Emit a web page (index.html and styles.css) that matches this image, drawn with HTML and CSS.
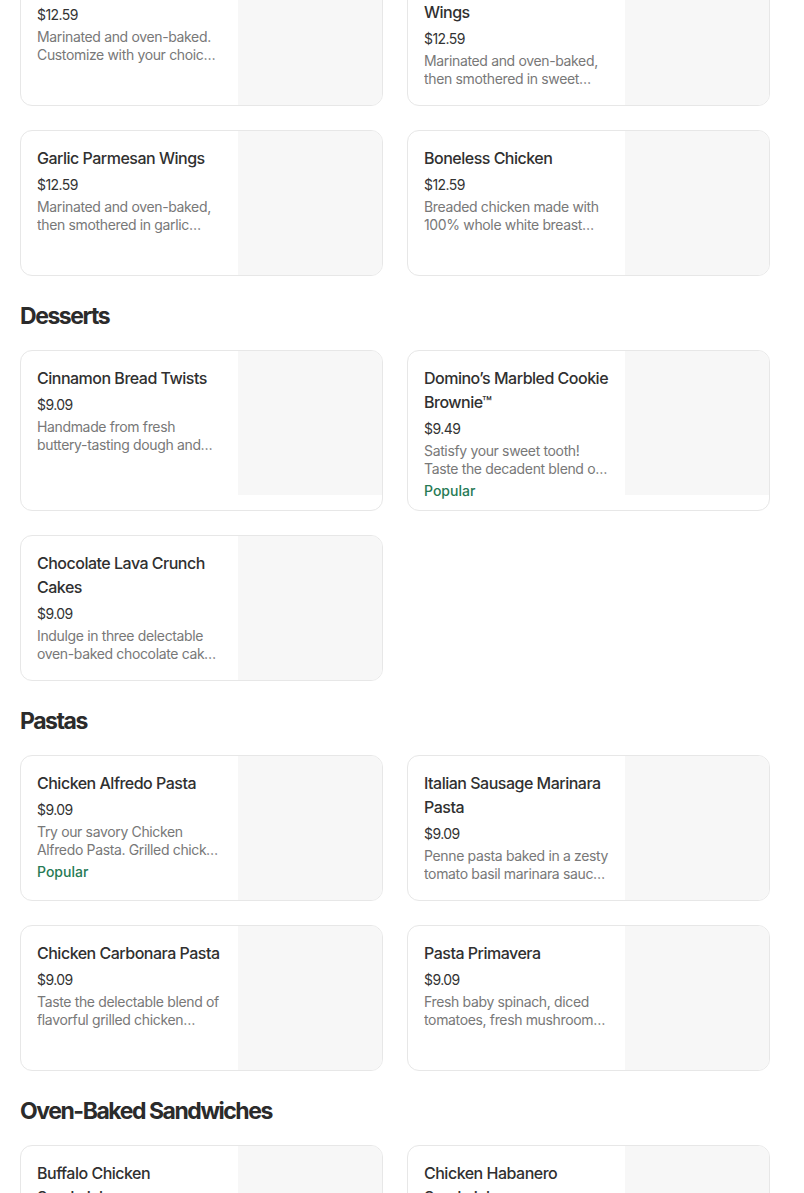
FILE: index.html
```html
<!DOCTYPE html>
<html lang="en">
<head>
<meta charset="utf-8">
<title>Menu</title>
<link rel="stylesheet" href="styles.css">
</head>
<body>
<main class="menu">
  <section class="section section-first">
    <div class="grid">
      <article class="card">
        <div class="info">
          <h3 class="title">Plain Wings</h3>
          <div class="price">$12.59</div>
          <p class="desc">Marinated and oven-baked. Customize with your choice of dipping sauce.</p>
        </div>
        <div class="thumb"></div>
      </article>
      <article class="card">
        <div class="info">
          <h3 class="title">Sweet Mango Habanero Wings</h3>
          <div class="price">$12.59</div>
          <p class="desc">Marinated and oven-baked, then smothered in sweet mango habanero sauce.</p>
        </div>
        <div class="thumb"></div>
      </article>
      <article class="card">
        <div class="info">
          <h3 class="title">Garlic Parmesan Wings</h3>
          <div class="price">$12.59</div>
          <p class="desc">Marinated and oven-baked, then smothered in garlic parmesan sauce.</p>
        </div>
        <div class="thumb"></div>
      </article>
      <article class="card">
        <div class="info">
          <h3 class="title">Boneless Chicken</h3>
          <div class="price">$12.59</div>
          <p class="desc">Breaded chicken made with 100% whole white breast meat.</p>
        </div>
        <div class="thumb"></div>
      </article>
    </div>
  </section>

  <section class="section">
    <h2 class="heading">Desserts</h2>
    <div class="grid">
      <article class="card">
        <div class="info">
          <h3 class="title">Cinnamon Bread Twists</h3>
          <div class="price">$9.09</div>
          <p class="desc">Handmade from fresh buttery-tasting dough and baked to a golden brown.</p>
        </div>
        <div class="thumb"></div>
      </article>
      <article class="card">
        <div class="info">
          <h3 class="title">Domino’s Marbled Cookie Brownie™</h3>
          <div class="price">$9.49</div>
          <p class="desc">Satisfy your sweet tooth! Taste the decadent blend of gooey milk chocolate chunk cookie and delicious fudge brownie.</p>
          <div class="tag">Popular</div>
        </div>
        <div class="thumb"></div>
      </article>
      <article class="card">
        <div class="info">
          <h3 class="title">Chocolate Lava Crunch Cakes</h3>
          <div class="price">$9.09</div>
          <p class="desc">Indulge in three delectable oven-baked chocolate cakes with molten chocolate fudge on the inside.</p>
        </div>
        <div class="thumb"></div>
      </article>
    </div>
  </section>

  <section class="section">
    <h2 class="heading">Pastas</h2>
    <div class="grid">
      <article class="card">
        <div class="info">
          <h3 class="title">Chicken Alfredo Pasta</h3>
          <div class="price">$9.09</div>
          <p class="desc">Try our savory Chicken Alfredo Pasta. Grilled chicken breast and creamy Alfredo sauce.</p>
          <div class="tag">Popular</div>
        </div>
        <div class="thumb"></div>
      </article>
      <article class="card">
        <div class="info">
          <h3 class="title">Italian Sausage Marinara Pasta</h3>
          <div class="price">$9.09</div>
          <p class="desc">Penne pasta baked in a zesty tomato basil marinara sauce with Italian sausage.</p>
        </div>
        <div class="thumb"></div>
      </article>
      <article class="card">
        <div class="info">
          <h3 class="title">Chicken Carbonara Pasta</h3>
          <div class="price">$9.09</div>
          <p class="desc">Taste the delectable blend of flavorful grilled chicken breast, smoked bacon and onions.</p>
        </div>
        <div class="thumb"></div>
      </article>
      <article class="card">
        <div class="info">
          <h3 class="title">Pasta Primavera</h3>
          <div class="price">$9.09</div>
          <p class="desc">Fresh baby spinach, diced tomatoes, fresh mushrooms and onions.</p>
        </div>
        <div class="thumb"></div>
      </article>
    </div>
  </section>

  <section class="section">
    <h2 class="heading">Oven-Baked Sandwiches</h2>
    <div class="grid">
      <article class="card">
        <div class="info">
          <h3 class="title">Buffalo Chicken Sandwich</h3>
          <div class="price">$8.49</div>
          <p class="desc">Grilled chicken breast, creamy ranch and hot buffalo sauce.</p>
        </div>
        <div class="thumb"></div>
      </article>
      <article class="card">
        <div class="info">
          <h3 class="title">Chicken Habanero Sandwich</h3>
          <div class="price">$8.49</div>
          <p class="desc">Grilled chicken breast, jalapeno and mango habanero sauce.</p>
        </div>
        <div class="thumb"></div>
      </article>
    </div>
  </section>
</main>
</body>
</html>
```

FILE: styles.css
```css
* {
  box-sizing: border-box;
}

html, body {
  margin: 0;
  padding: 0;
  background: #ffffff;
}

body {
  font-family: Inter, "Liberation Sans", sans-serif;
  color: #333333;
}

.menu {
  padding: 0 34px 0 20px;
  margin-top: -40px;
}

.section + .section {
  margin-top: 24px;
}

.heading {
  margin: 0 0 18px;
  font-size: 23px;
  line-height: 32px;
  font-weight: 700;
  letter-spacing: -1.45px;
  color: #2b2b2b;
}

.grid {
  display: grid;
  grid-template-columns: 1fr 1fr;
  gap: 24px;
}

.card {
  display: flex;
  align-items: flex-start;
  border: 1px solid #e7e7e7;
  border-radius: 12px;
  overflow: hidden;
  background: #ffffff;
  min-height: 146px;
}

.info {
  flex: 1;
  min-width: 0;
  padding: 15px 15px 9px 16px;
}

.title {
  margin: 0;
  font-size: 16px;
  line-height: 24px;
  font-weight: 500;
  letter-spacing: -0.5px;
  color: #303030;
}

.price {
  margin-top: 5px;
  font-size: 14px;
  line-height: 20px;
  letter-spacing: -0.55px;
  color: #333333;
}

.desc {
  margin: 3px 0 0;
  font-size: 14px;
  line-height: 18px;
  letter-spacing: -0.35px;
  color: #787878;
  display: -webkit-box;
  -webkit-line-clamp: 2;
  -webkit-box-orient: vertical;
  overflow: hidden;
}

.tag {
  margin-top: 3px;
  font-size: 14px;
  line-height: 20px;
  font-weight: 500;
  color: #277a55;
}

.thumb {
  flex: 0 0 144px;
  width: 144px;
  height: 144px;
  background: #f7f7f7;
}
```
